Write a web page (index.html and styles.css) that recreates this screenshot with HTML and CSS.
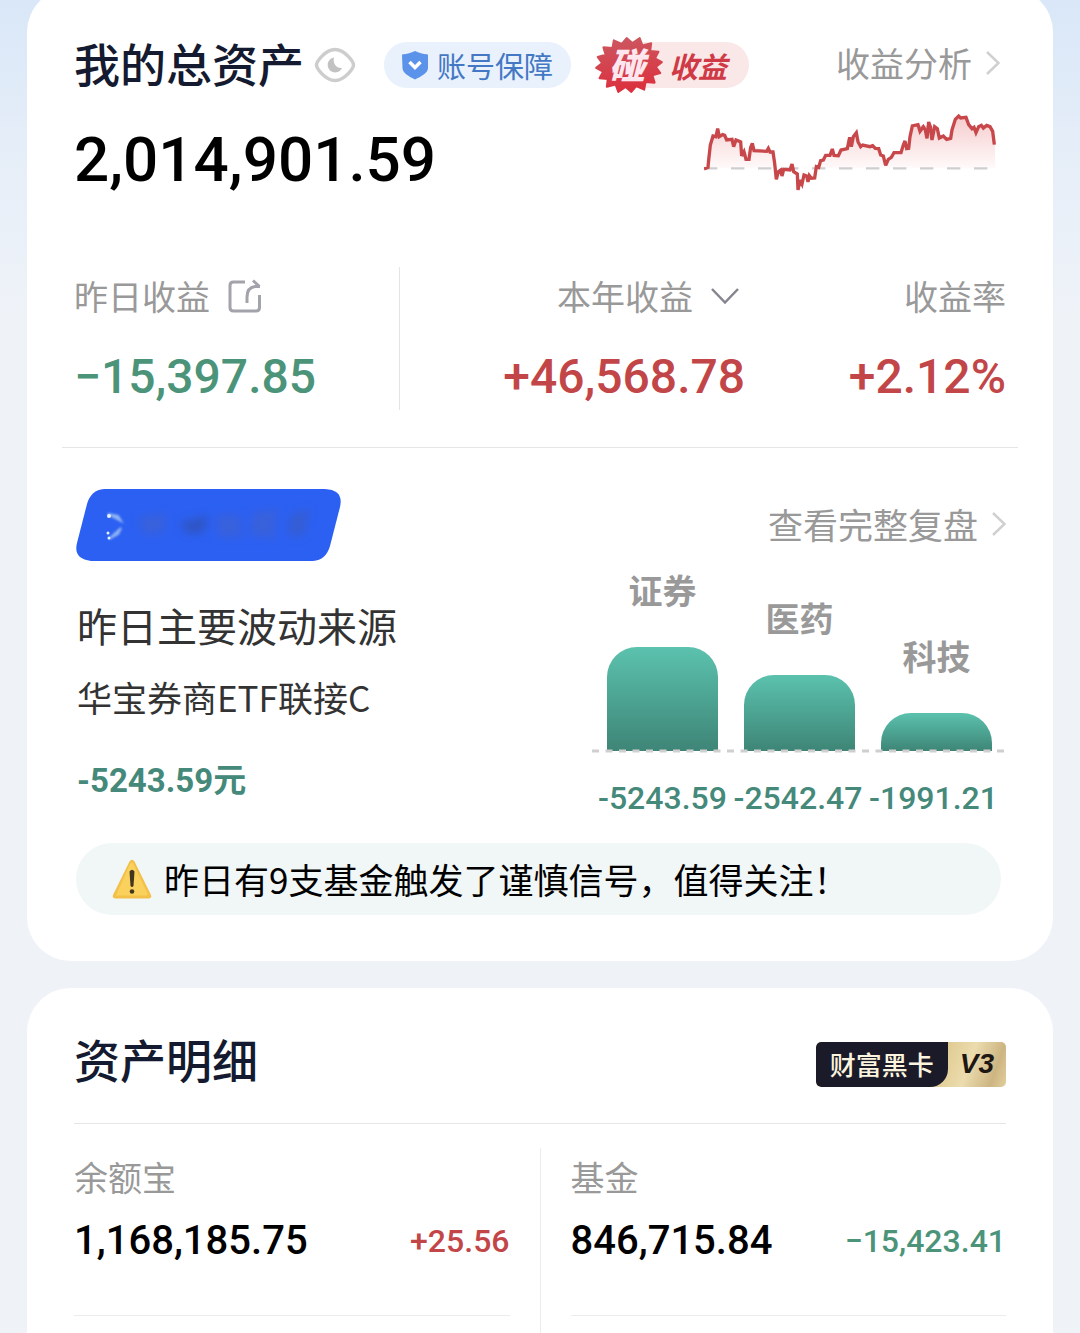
FILE: index.html
```html
<!DOCTYPE html>
<html lang="zh-CN">
<head>
    <meta charset="UTF-8">
    <meta name="viewport" content="width=device-width, initial-scale=1.0">
    <title>我的总资产</title>
    <link rel="stylesheet" href="styles.css">
</head>
<body>
    <main class="card total-card">
        <header class="total-header">
            <h1>我的总资产</h1>
            <button type="button" class="icon-button eye-button" aria-label="隐藏金额">
                <svg width="42" height="36" viewBox="0 0 42 36">
                    <path d="M2.500 18C2.500 15 11 2.500 21 2.500S39.500 15 39.500 18 31 33.500 21 33.500 2.500 21 2.500 18Z" fill="none" stroke="#cdcdcd" stroke-width="3.500"/>
                    <path d="M20 10.500A7.500 7.500 0 1 0 28 21C22.500 21.500 18.500 17 20 10.500Z" fill="#c2c2c2"/>
                </svg>
            </button>
            <a href="#" class="pill pill-blue">
                <svg width="28" height="30" viewBox="0 0 28 30">
                    <path d="M14 1C18 3 22 4 26 4.200Q27 4.300 27 5.500V18C27 23 20 26.500 14 29.500 8 26.500 1.500 23 1.500 18L1 5.500Q1 4.300 2 4.200C6 4 10 3 14 1Z" fill="#5c93ea"/>
                    <path d="M8.500 12L14 17.500 19.500 12" fill="none" stroke="#fff" stroke-width="3.500"/>
                </svg>
                账号保障
            </a>
            <a href="#" class="pill-red">
                <svg width="70" height="58" viewBox="-35 -29 70 58">
                    <defs>
                        <linearGradient id="seal" x1="0" y1="0" x2="0" y2="1">
                            <stop offset="0" stop-color="#cc5660"/>
                            <stop offset="1" stop-color="#dc2f3c"/>
                        </linearGradient>
                    </defs>
                    <polygon transform="rotate(-5)" points="33,0 26.500,4.300 30.500,10.700 22.400,12.200 24,19.800 15,18.300 13,25.900 5.300,21.600 0,27 -5.300,21.600 -13,25.900 -15,18.300 -24,19.800 -22.400,12.200 -30.500,10.700 -26.500,4.300 -33,0 -26.500,-4.300 -30.500,-10.700 -22.400,-12.200 -24,-19.800 -15,-18.300 -13,-25.900 -5.300,-21.600 0,-27 5.300,-21.600 13,-25.900 15,-18.300 24,-19.800 22.400,-12.200 30.500,-10.700 26.500,-4.300" fill="url(#seal)" stroke="url(#seal)" stroke-width="2" stroke-linejoin="round"/>
                    <text x="-2" y="14" text-anchor="middle" class="seal-text">碰</text>
                </svg>
                <span>收益</span>
            </a>
            <a href="#" class="more-link">收益分析
                <svg width="14" height="26" viewBox="0 0 14 26"><path d="M1 2L12.500 13 1 24" fill="none" stroke="#d0d0d0" stroke-width="2.500"/></svg>
            </a>
        </header>

        <div class="total-row">
            <p class="total-amount">2,014,901.59</p>
            <svg class="trend" width="292" height="80" viewBox="42 246 876 240">
                <defs>
                    <linearGradient id="trendFill" gradientUnits="userSpaceOnUse" x1="0" y1="250" x2="0" y2="415">
                        <stop offset="0" stop-color="#f5c9ca"/>
                        <stop offset="1" stop-color="#fffafa"/>
                    </linearGradient>
                </defs>
                <path fill="url(#trendFill)" d="M55 412L62 345 72 318 98 316 150 335 160 378 186 350 246 366 258 415 380 412 405 376 445 375 475 350 498 310 512 348 560 350 588 400 612 370 652 352 668 286 690 286 735 290 750 325 780 322 800 264 828 260 845 300 870 292 900 288 915 345V415H55Z"/>
                <path fill="none" stroke="#cfcfcf" stroke-width="7" stroke-dasharray="40 41" d="M42 415H915"/>
                <path fill="none" stroke="#c8474b" stroke-width="10" stroke-linejoin="miter" stroke-miterlimit="3" d="M42 417L54 412 56 390 61 345 69 318 78 320 83 296 88 320 98 314 104 316 110 330 126 328 131 350 138 330 152 336 155 378 162 365 168 388 177 388 182 352 187 340 192 362 230 364 235 355 240 366 249 366 254 400 259 448 265 425 272 420 276 438 281 418 300 420 306 402 311 425 322 432 324 480 330 450 336 462 342 435 350 438 354 456 358 437 364 445 374 444 379 410 386 412 392 392 400 390 407 376 420 376 427 357 432 376 445 377 453 360 472 356 479 322 484 350 490 320 499 308 504 335 512 350 518 345 540 350 548 347 556 355 566 356 572 375 580 378 587 406 595 388 604 382 612 368 633 368 640 345 645 333 650 356 656 355 660 320 667 288 684 284 690 304 700 290 706 300 711 325 716 276 721 290 726 330 734 290 742 296 748 324 760 318 770 328 782 325 786 300 796 268 806 258 812 264 828 262 836 284 846 296 852 292 858 308 866 290 874 286 880 294 890 286 900 290 908 304 913 344"/>
            </svg>
        </div>

        <dl class="stats">
            <div class="stat stat-day">
                <dt>昨日收益
                    <svg width="34" height="34" viewBox="0 0 34 34" fill="none" stroke="#a3a3ab" stroke-width="3">
                        <path d="M17 3H5.500Q2 3 2 6.500V28.500Q2 32 5.500 32H28Q31.500 32 31.500 28.500V16"/>
                        <path d="M19 24V18Q19 8.500 27 7.500H32M25 1.500L31.500 7.500"/>
                    </svg>
                </dt>
                <dd class="down">−15,397.85</dd>
            </div>
            <div class="stat stat-year">
                <dt>本年收益
                    <svg width="28" height="18" viewBox="0 0 28 18"><path d="M1 2L14 15.500 27 2" fill="none" stroke="#85858f" stroke-width="2.500"/></svg>
                </dt>
                <dd class="up">+46,568.78</dd>
            </div>
            <div class="stat stat-rate">
                <dt>收益率</dt>
                <dd class="up">+2.12%</dd>
            </div>
        </dl>

        <section class="review">
            <div class="review-header">
                <svg class="review-badge" width="265" height="72" viewBox="0 0 265 72">
                    <defs>
                        <filter id="smudge" x="-50%" y="-50%" width="200%" height="200%"><feGaussianBlur stdDeviation="4"/></filter>
                        <filter id="glow" x="-50%" y="-50%" width="200%" height="200%"><feGaussianBlur stdDeviation="1"/></filter>
                    </defs>
                    <path d="M28 0H249Q268 1 264 18L254 57Q250 71 237 72H15Q-3 70 1 54L11 15Q15 1 28 0Z" fill="#2c60f2"/>
                    <g fill="#3f62cd" opacity=".6" filter="url(#smudge)">
                        <path d="M62 28L90 24 88 44 68 46Z"/>
                        <path d="M103 34L132 26 128 44 112 45Z" fill="#3050a8"/>
                        <path d="M140 26H164L166 48H142Z"/>
                        <path d="M176 24L202 20 198 50 174 46Z"/>
                        <path d="M214 26L234 20 228 46 212 48Z" fill="#3a5cc0"/>
                    </g>
                    <path d="M32 25L42 27 45 32ZM33 50L42 45 45 39Z" fill="#8fb4f3" stroke="#8fb4f3" stroke-width="2" filter="url(#glow)"/>
                    <g fill="#e4f3ff"><circle cx="33" cy="27" r="2"/><circle cx="32" cy="44" r="1.500"/><circle cx="33" cy="49" r="1.500"/></g>
                </svg>
                <a href="#" class="more-link review-link">查看完整复盘
                    <svg width="14" height="26" viewBox="0 0 14 26"><path d="M1 2L12.500 13 1 24" fill="none" stroke="#d0d0d0" stroke-width="2.500"/></svg>
                </a>
            </div>
            <div class="review-body">
                <div class="source">
                    <h2>昨日主要波动来源</h2>
                    <p class="fund-name">华宝券商ETF联接C</p>
                    <p class="fund-loss">-5243.59元</p>
                </div>
                <div class="chart">
                    <div class="bars">
                        <div class="bar-item"><span>证券</span><div class="bar" style="height: 104px"></div></div>
                        <div class="bar-item"><span>医药</span><div class="bar" style="height: 76px"></div></div>
                        <div class="bar-item"><span>科技</span><div class="bar" style="height: 38px"></div></div>
                        <svg class="axis" width="100%" height="4"><line x1="0" y1="2" x2="100%" y2="2" stroke="#cfcfcf" stroke-width="3" stroke-dasharray="7 6.500"/></svg>
                    </div>
                    <div class="bar-values">
                        <span>-5243.59</span>
                        <span>-2542.47</span>
                        <span>-1991.21</span>
                    </div>
                </div>
            </div>
            <p class="notice">
                <svg width="40" height="40" viewBox="0 0 40 40">
                    <path d="M17.500 2.500Q20 -1 22.500 2.500L39 36Q40 39 37 39.500H3Q0 39 1 36Z" fill="#f3c04a"/>
                    <path d="M18 5Q20 2 21.500 5L35.500 34.500Q36 36.500 34 36.500H4Z" fill="#fad15c"/>
                    <path d="M17.500 12.500Q20 9 22.500 12.500L21.500 27Q20 29 18.500 27Z" fill="#42361f"/>
                    <circle cx="20" cy="32.500" r="2.300" fill="#42361f"/>
                </svg>
                昨日有9支基金触发了谨慎信号，值得关注！
            </p>
        </section>
    </main>

    <section class="card detail-card">
        <header class="detail-header">
            <h1>资产明细</h1>
            <a href="#" class="vip"><span class="vip-name">财富黑卡</span><span class="vip-level">V3</span></a>
        </header>
        <div class="assets">
            <div class="asset">
                <h3>余额宝</h3>
                <p><span class="asset-amount">1,168,185.75</span><span class="asset-change up">+25.56</span></p>
            </div>
            <div class="assets-divider"></div>
            <div class="asset">
                <h3>基金</h3>
                <p><span class="asset-amount">846,715.84</span><span class="asset-change down">−15,423.41</span></p>
            </div>
        </div>
    </section>
</body>
</html>
```
FILE: styles.css
```css
* {
    box-sizing: border-box;
    margin: 0;
    padding: 0;
}

body {
    display: flex;
    flex-direction: column;
    gap: 27px;
    min-height: 100vh;
    padding: 0 27px;
    overflow-x: hidden;
    background: linear-gradient(#d9e7f8 0, #e6eef8 160px, #eff3f8 320px);
    font-family: "Noto Sans CJK SC", sans-serif;
    font-size: 34px;
    line-height: 48px;
    color: #000;
}

a {
    color: inherit;
    text-decoration: none;
}

svg {
    display: block;
    flex: none;
}

h1 {
    font-size: 46px;
    font-weight: 500;
    line-height: 60px;
    color: #141a30;
}

.card {
    padding: 0 47px;
    border-radius: 44px;
    background: #fff;
}

.up {
    color: #c24648;
}

.down {
    color: #4c9479;
}

/* 总资产 */
.total-card {
    margin-top: -12px;
    padding-top: 44px;
    padding-bottom: 46px;
}

.total-header {
    display: flex;
    align-items: center;
    padding-right: 6px;
}

.total-header h1 {
    padding-bottom: 2px;
}

.icon-button {
    border: none;
    background: none;
}

.eye-button {
    margin: 4px 28px 0 10px;
}

.pill {
    display: flex;
    align-items: center;
    gap: 8px;
    height: 46px;
    margin-top: 4px;
    padding: 0 18px 0 17px;
    border-radius: 23px;
    font-size: 29px;
}

.pill-blue {
    background: #e8f1fc;
    color: #4478c4;
}

.pill-red {
    display: flex;
    align-items: center;
    margin: 4px 0 0 23px;
    font-size: 29px;
    font-weight: 700;
    font-style: italic;
    color: #cf3a46;
}

.pill-red svg {
    z-index: 1;
}

.pill-red span {
    margin-left: -30px;
    padding: 0 22px 0 35px;
    border-radius: 0 23px 23px 0;
    background: #fae8e9;
    line-height: 46px;
}

.seal-text {
    font-size: 36px;
    font-weight: 900;
    font-style: italic;
    fill: #fde6ee;
}

.more-link {
    display: flex;
    align-items: center;
    gap: 14px;
    margin-left: auto;
    color: #999;
}

.total-row {
    display: flex;
    justify-content: space-between;
    align-items: flex-end;
    margin-top: 18px;
    padding-right: 10px;
}

.total-amount {
    font-family: Roboto, sans-serif;
    font-size: 62px;
    font-weight: 500;
    line-height: 64px;
}

.stats {
    display: grid;
    grid-template-columns: 35fr 37fr 28fr;
    margin-top: 75px;
}

.stat {
    display: flex;
    flex-direction: column;
    gap: 29px;
    padding: 5px 0;
}

.stat dt {
    display: flex;
    align-items: center;
    gap: 18px;
    color: #999;
}

.stat dd {
    font-family: Roboto, sans-serif;
    font-size: 48px;
    font-weight: 500;
    line-height: 56px;
}

.stat-day {
    border-right: 1px solid #e4e4e4;
}

.stat-year,
.stat-rate {
    align-items: flex-end;
}

.stat-year dt {
    padding-right: 6px;
}

/* 复盘 */
.review {
    margin: 37px -12px 0;
    padding: 41px 12px 0;
    border-top: 1px solid #e6e6e6;
}

.review-header {
    display: flex;
    align-items: center;
    padding-left: 2px;
}

.review-link,
.fund-name,
.notice {
    font-size: 35px;
}

.review-link {
    padding-bottom: 2px;
}

.review-body {
    display: flex;
    justify-content: space-between;
    padding: 0 2px 0 3px;
}

.source {
    padding-top: 36px;
    color: #333;
}

.source h2 {
    font-size: 40px;
    font-weight: 400;
    line-height: 56px;
}

.fund-name {
    margin-top: 20px;
}

.fund-loss {
    margin-top: 36px;
    font-family: Roboto, "Noto Sans CJK SC", sans-serif;
    font-size: 33px;
    font-weight: 700;
    color: #45897a;
}

.chart {
    width: 412px;
}

.bars {
    position: relative;
    display: flex;
    align-items: flex-end;
    gap: 26px;
    height: 190px;
    padding: 0 12px 0 15px;
}

.bar-item {
    flex: 1;
    text-align: center;
    font-weight: 700;
    color: #999;
}

.bar {
    margin-top: 33px;
    border-radius: 30px 30px 0 0;
    background: linear-gradient(#5bc2ae, #3e8576);
}

.axis {
    position: absolute;
    left: 0;
    bottom: -2px;
}

.bar-values {
    display: flex;
    justify-content: space-between;
    margin-top: 23px;
    padding: 0 6px;
    font-family: Roboto, sans-serif;
    font-size: 32px;
    font-weight: 500;
    color: #45897a;
}

.notice {
    display: flex;
    align-items: center;
    gap: 12px;
    height: 72px;
    margin: 21px 5px 0 2px;
    padding: 0 36px;
    border-radius: 36px;
    background: #f1f6f7;
}

/* 资产明细 */
.detail-card {
    display: flex;
    flex: 1;
    flex-direction: column;
    padding-top: 40px;
    border-radius: 44px 44px 0 0;
}

.detail-header {
    display: flex;
    justify-content: space-between;
    align-items: center;
    padding-bottom: 35px;
    border-bottom: 1px solid #e6e6e6;
}

.vip {
    display: flex;
    height: 45px;
    margin-top: 12px;
    overflow: hidden;
    border-radius: 5px;
    background: linear-gradient(110deg, #dcc68a 60%, #ecdcae 78%, #cdb582 92%, #e2cf9c);
    line-height: 44px;
}

.vip-name {
    padding: 0 14px;
    border-radius: 5px 0 18px 5px;
    background: #1b1a28;
    font-size: 26px;
    font-weight: 500;
    color: #fbf4df;
}

.vip-level {
    padding: 0 12px;
    font-family: "Liberation Sans", sans-serif;
    font-size: 28px;
    font-weight: 700;
    font-style: italic;
    color: #1c1712;
}

.assets {
    display: grid;
    flex: 1;
    grid-template-columns: 1fr 1px 1fr;
    gap: 30px;
    padding-top: 24px;
}

.assets-divider {
    background: #ececec;
}

.asset {
    align-self: start;
    padding: 5px 0 46px;
    border-bottom: 1px solid #ececec;
}

.asset h3 {
    font-size: 34px;
    font-weight: 400;
    color: #999;
}

.asset p {
    display: flex;
    justify-content: space-between;
    align-items: center;
    margin-top: 12px;
    font-family: Roboto, sans-serif;
    font-weight: 500;
    line-height: 56px;
}

.asset-amount {
    font-size: 40px;
}

.asset-change {
    font-size: 32px;
}
```
